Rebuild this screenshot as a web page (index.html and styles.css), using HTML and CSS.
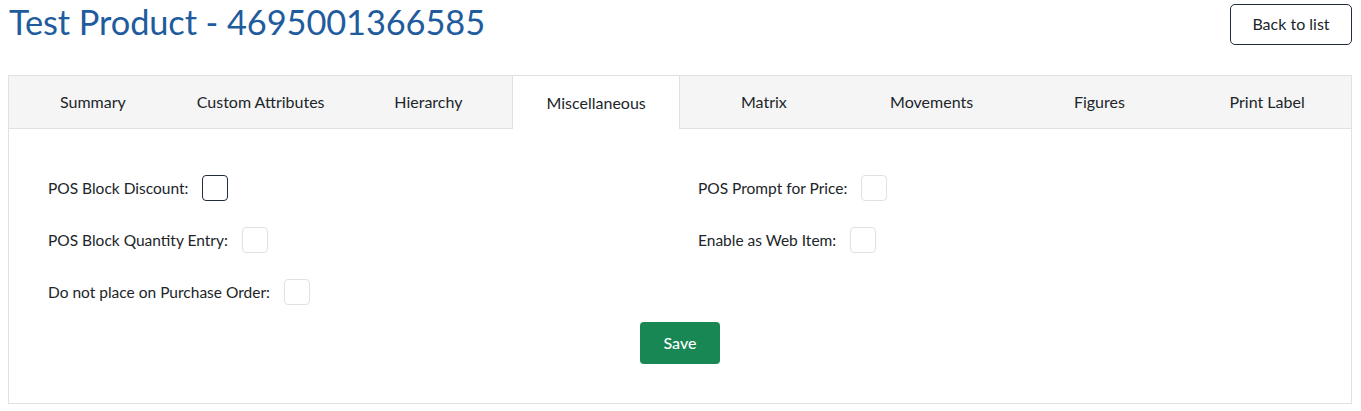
FILE: index.html
```html
<!DOCTYPE html>
<html>
<head>
<meta charset="utf-8">
<link rel="stylesheet" href="styles.css">
</head>
<body>
<div class="page">
  <header class="head">
    <h1 class="title">Test Product - 4695001366585</h1>
    <button class="btn-back">Back to list</button>
  </header>
  <div class="panel">
    <nav class="tabs">
      <div class="tab">Summary</div>
      <div class="tab">Custom Attributes</div>
      <div class="tab">Hierarchy</div>
      <div class="tab active">Miscellaneous</div>
      <div class="tab">Matrix</div>
      <div class="tab">Movements</div>
      <div class="tab">Figures</div>
      <div class="tab">Print Label</div>
    </nav>
    <div class="body">
      <div class="grid">
        <div class="col">
          <label class="field">POS Block Discount: <span class="check focus"></span></label>
          <label class="field">POS Block Quantity Entry: <span class="check"></span></label>
          <label class="field">Do not place on Purchase Order: <span class="check"></span></label>
        </div>
        <div class="col">
          <label class="field">POS Prompt for Price: <span class="check"></span></label>
          <label class="field">Enable as Web Item: <span class="check"></span></label>
        </div>
      </div>
      <div class="actions"><button class="btn-save">Save</button></div>
    </div>
  </div>
</div>
</body>
</html>
```
FILE: styles.css
```css
* { box-sizing: border-box; }
html, body { margin: 0; padding: 0; background: #fff; }
body { font-family: "Lato", "Liberation Sans", sans-serif; color: #212529; }
.page { padding: 0 9px 0 8px; }
.head { display: flex; justify-content: space-between; align-items: flex-start; height: 75px; }
.title { margin: 0; padding-top: 1px; font-weight: 400; font-size: 34.4px; line-height: 42px; color: #1f5c9e; padding-left: 1px; letter-spacing: -0.1px; }
.btn-back { margin-top: 4px; width: 122px; height: 41px; background: #fff; border: 1px solid #1f2d3d; border-radius: 5px; font-family: inherit; font-size: 16px; color: #212529; padding: 0 0 2px; }
.panel { border: 1px solid #dee2e6; height: 329px; }
.tabs { display: grid; grid-template-columns: repeat(8, 1fr); background: #f5f5f5; height: 53px; border-bottom: 1px solid #dee2e6; }
.tab { display: flex; align-items: center; justify-content: center; font-size: 16px; color: #212529; padding-bottom: 1px; }
.tab.active { background: #fff; border-left: 1px solid #dee2e6; border-right: 1px solid #dee2e6; margin-bottom: -1px; }
.body { padding: 46px 0 0 39px; }
.grid { display: grid; grid-template-columns: 650px 1fr; }
.col { display: flex; flex-direction: column; gap: 26px; }
.field { display: flex; align-items: center; gap: 14px; font-size: 15.5px; height: 26px; color: #212529; }
.check { width: 26px; height: 26px; border: 1px solid #dee2e6; border-radius: 4px; display: inline-block; }
.check.focus { border-color: #1f2d3d; }
.actions { display: flex; justify-content: center; margin-left: -39px; margin-top: 17px; }
.btn-save { width: 80px; height: 42px; background: #198754; color: #fff; border: none; border-radius: 4px; font-family: inherit; font-size: 16px; font-weight: 500; padding: 0 0 2px; }
```
